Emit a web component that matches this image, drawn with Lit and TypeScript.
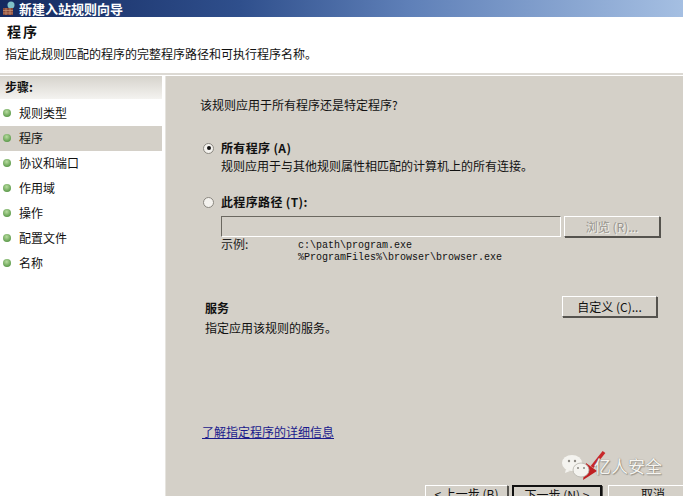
import { LitElement, html, css } from "lit";
import { customElement } from "lit/decorators.js";

const steps = ["规则类型", "程序", "协议和端口", "作用域", "操作", "配置文件", "名称"];

@customElement("app-root")
export class AppRoot extends LitElement {
  static styles = css`
    :host { display: block; width: 683px; height: 496px; overflow: hidden; position: relative;
      font-family: "Noto Sans CJK SC", "Liberation Sans", sans-serif; font-size: 12px; line-height: 14px; color: #111; background: #fff; }
    .title { height: 17px; background: linear-gradient(90deg, #14295f 0%, #2f4f8c 35%, #5f80b8 60%, #a5bfe2 100%);
      display: flex; align-items: center; gap: 3px; padding-left: 2px; color: #fff; font-weight: 700; font-size: 13px; }
    .head { height: 58px; box-sizing: border-box; padding: 5px 0 0 7px; border-bottom: 2px solid #dcd9d3; }
    .head h1 { margin: 0; font-size: 14px; line-height: 18px; font-weight: 700; letter-spacing: 2px; }
    .head p { margin: 7px 0 0 -2px; white-space: nowrap; }
    .main { display: flex; height: 421px; background: #fff; padding-top: 1px; box-sizing: border-box; }
    .side { width: 162px; flex: none; }
    .side h2 { margin: 0 0 2px; height: 23px; padding: 0 0 0 5px; font-size: 12px; line-height: 22px; font-weight: 700;
      background: linear-gradient(#d6d3cc, #f4f3f0); }
    .step { display: flex; align-items: center; height: 25px; box-sizing: border-box; padding: 0 0 2px 3px; gap: 8px; }
    .step.on { background: #d4d0c8; }
    .dot { width: 8px; height: 8px; border-radius: 50%; background: radial-gradient(circle at 45% 35%, #b8dca0, #5c9a4a 75%); }
    .gap { width: 1px; background: #e6e4df; }
    .white { width: 3px; }
    .panel { flex: 1; background: #d4d0c8; padding: 22px 0 0 34px; min-width: 0; }
    .q { margin: 0; }
    .opt { display: flex; align-items: center; gap: 7px; height: 14px; font-weight: 700; margin: 29px 0 0 3px; letter-spacing: .35px; }
    .radio { width: 11px; height: 11px; flex: none; border-radius: 50%; background: #f4f2ee; border: 1px solid #8a8780; box-sizing: border-box;
      display: flex; align-items: center; justify-content: center; }
    .radio i { width: 4px; height: 4px; border-radius: 50%; background: #111; }
    .desc { margin: 4px 0 0 21px; white-space: nowrap; }
    .opt.second { margin-top: 22px; }
    .pathrow { display: flex; margin: 7px 0 0 21px; gap: 3px; }
    .input { width: 340px; height: 21px; box-sizing: border-box; border: 1px solid; border-color: #6b6860 #fff #fff #6b6860; background: #d4d0c8; }
    .btn { box-sizing: border-box; height: 21px; width: 96px; border: 1px solid; border-color: #fff #55534e #55534e #fff; background: #d4d0c8;
      display: flex; align-items: center; justify-content: center; font-size: 12px; box-shadow: 1px 1px 0 #55534e; white-space: nowrap; }
    .btn.off { color: #97948d; text-shadow: 1px 1px 0 #f2f0ec; }
    .example { display: flex; margin: 0 0 0 21px; font-size: 12px; }
    .example span { width: 77px; flex: none; color: #222; }
    .example pre { margin: 3px 0 0; font-family: "Liberation Mono", monospace; font-size: 10px; line-height: 12px; }
    .svc { display: flex; justify-content: space-between; margin: 32px 26px 0 5px; align-items: flex-start; }
    .svc b { display: block; margin-top: 5px; }
    .svc .btn { width: 95px; }
    .svc-desc { margin: 4px 0 0 5px; }
    .link { display: block; margin: 90px 0 0 2px; color: #1a1a8c; text-decoration: underline; }
    .foot { display: flex; margin: 46px 0 0 225px; gap: 4px; }
    .foot .btn { height: 24px; width: 83px; align-items: flex-start; padding-top: 1px; flex: none; }
    .foot .next { width: 90px; border: 2px solid #111; }
    .foot .cancel { width: 90px; margin-left: 2px; }
    .mark { position: absolute; left: 561px; top: 454px; display: flex; align-items: center; gap: 4px; color: #f6f5f1;
      font-size: 17px; line-height: 24px; text-shadow: 0 0 1px #77746d, 1px 1px 1px #9a978f; }
    .arrow { position: absolute; left: 580px; top: 450px; }
  `;

  render() {
    return html`
      <div class="title">
        <svg width="14" height="15" viewBox="0 0 14 15">
          <circle cx="9" cy="4" r="3.5" fill="#7fc0c8"/><rect x="1" y="7" width="10" height="7" fill="#8a4a3a"/>
          <path d="M1 9.5h10M1 12h10M4 7v7M8 7v7" stroke="#c99a7a" stroke-width=".7"/>
        </svg>
        <span>新建入站规则向导</span>
      </div>
      <div class="head">
        <h1>程序</h1>
        <p>指定此规则匹配的程序的完整程序路径和可执行程序名称。</p>
      </div>
      <div class="main">
        <div class="side">
          <h2>步骤:</h2>
          ${steps.map((s, i) => html`<div class="step ${i === 1 ? "on" : ""}"><span class="dot"></span><span>${s}</span></div>`)}
        </div>
        <div class="white"></div><div class="gap"></div>
        <div class="panel">
          <p class="q">该规则应用于所有程序还是特定程序?</p>
          <div class="opt"><span class="radio"><i></i></span><span>所有程序 (A)</span></div>
          <p class="desc">规则应用于与其他规则属性相匹配的计算机上的所有连接。</p>
          <div class="opt second"><span class="radio"></span><span>此程序路径 (T):</span></div>
          <div class="pathrow"><div class="input"></div><div class="btn off">浏览 (R)...</div></div>
          <div class="example"><span>示例:</span><pre>c:\\path\\program.exe
%ProgramFiles%\\browser\\browser.exe</pre></div>
          <div class="svc"><b>服务</b><div class="btn">自定义 (C)...</div></div>
          <p class="svc-desc">指定应用该规则的服务。</p>
          <a class="link">了解指定程序的详细信息</a>
          <div class="foot">
            <div class="btn">&lt; 上一步 (B)</div>
            <div class="btn next">下一步 (N) &gt;</div>
            <div class="btn cancel">取消</div>
          </div>
        </div>
      </div>
      <svg class="arrow" width="26" height="32" viewBox="0 0 26 32">
        <path d="M24 2L12 17" stroke="#c8282a" stroke-width="3.5" fill="none"/>
        <path d="M3 30L6 13l11 8z" fill="#c01f22"/>
      </svg>
      <div class="mark">
        <svg width="29" height="24" viewBox="0 0 29 24">
          <ellipse cx="11" cy="9" rx="10" ry="8" fill="#f4f3ef"/>
          <path d="M5 15l-1 4 5-2z" fill="#f4f3ef"/>
          <ellipse cx="20" cy="16" rx="8" ry="7" fill="#f4f3ef" stroke="#b5b2ab" stroke-width=".8"/>
          <circle cx="8" cy="7" r="1.2" fill="#8a8780"/><circle cx="14" cy="7" r="1.2" fill="#8a8780"/>
          <circle cx="17" cy="14" r="1" fill="#8a8780"/><circle cx="23" cy="14" r="1" fill="#8a8780"/>
        </svg>
        <span>亿人安全</span>
      </div>
    `;
  }
}
